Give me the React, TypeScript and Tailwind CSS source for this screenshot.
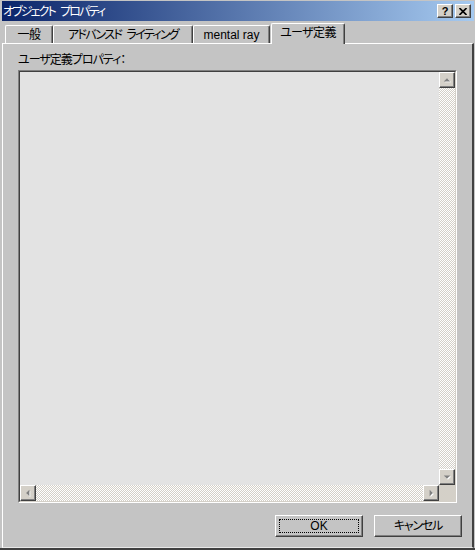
import React from 'react';

const Arrow = ({ dir }: { dir: 'up' | 'down' | 'left' | 'right' }) => {
    // small greyed-out triangle with a white shadow, like a disabled scroll arrow
    const shapes: Record<string, string> = {
        up: '4,9 7.5,5.5 11,9',
        down: '4,6 11,6 7.5,9.5',
        left: '9,4 9,11 5.5,7.5',
        right: '6,4 6,11 9.5,7.5',
    };
    return (
        <svg width="14" height="14" viewBox="0 0 15 15">
            <polygon points={shapes[dir]} fill="#ffffff" transform="translate(1 1)" />
            <polygon points={shapes[dir]} fill="#808080" />
        </svg>
    );
};

const ScrollButton = ({ dir }: { dir: 'up' | 'down' | 'left' | 'right' }) => (
    <div className="flex h-[16px] w-[16px] shrink-0 items-center justify-center border border-t-white border-l-white border-r-[#404040] border-b-[#404040] bg-[#d4d0c8] shadow-[inset_-1px_-1px_#808080]">
        <Arrow dir={dir} />
    </div>
);

const Track = ({ vertical }: { vertical?: boolean }) => (
    <div
        className={
            vertical
                ? 'w-full flex-1 bg-[image:repeating-conic-gradient(#ffffff_0_25%,#d4d0c8_0_50%)] bg-[length:2px_2px]'
                : 'h-full flex-1 bg-[image:repeating-conic-gradient(#ffffff_0_25%,#d4d0c8_0_50%)] bg-[length:2px_2px]'
        }
    />
);

const tabs = [
    { label: <>一般</>, key: 'general', className: 'w-[48px] tracking-[-0.5px]' },
    {
        label: (
            <>
                アドバンスド<span className="tracking-[2px]"> </span>ライティング
            </>
        ),
        key: 'advanced',
        className: 'w-[140px] tracking-[-1.7px]',
    },
    { label: <>mental ray</>, key: 'mr', className: 'w-[77px]' },
];

const App = () => {
    return (
        <div className="flex h-[550px] w-[475px] flex-col overflow-hidden border-b-2 border-b-[#404040] bg-[#c4c4c4] pl-[2px] pr-[1px] pt-[1px] font-['Liberation_Sans','Noto_Sans_CJK_JP',sans-serif] text-[12px] leading-[14px] text-black [font-feature-settings:'palt']">
            {/* title bar */}
            <div className="flex h-[20px] shrink-0 items-center justify-between bg-[linear-gradient(to_right,#0a246a,#a6caf0)] pl-[1px] pr-[3px]">
                <span className="pt-[2px] text-[12px] tracking-[-1.9px] text-white">
                    オブジェクト<span className="tracking-[2px]"> </span>プロパティ
                </span>
                <div className="flex gap-[2px]">
                    <div className="flex h-[14px] w-[16px] items-center justify-center border border-t-white border-l-white border-r-[#404040] border-b-[#404040] bg-[#d4d0c8] shadow-[inset_-1px_-1px_#808080] text-[11px] font-bold leading-none">
                        ?
                    </div>
                    <div className="flex h-[14px] w-[16px] items-center justify-center border border-t-white border-l-white border-r-[#404040] border-b-[#404040] bg-[#d4d0c8] shadow-[inset_-1px_-1px_#808080]">
                        <svg width="8" height="7" viewBox="0 0 8 7">
                            <path d="M0.5 0 L7.5 7 M7.5 0 L0.5 7" stroke="#000" strokeWidth="1.6" />
                        </svg>
                    </div>
                </div>
            </div>

            {/* tabs */}
            <div className="flex h-[22px] shrink-0 items-end pl-[3px]">
                {tabs.map((tab) => (
                    <div
                        key={tab.key}
                        className={`${tab.className} flex h-[18px] items-center justify-center rounded-t-[2px] border-l border-t border-r border-l-white border-t-white border-r-[#404040] shadow-[inset_-1px_0_#808080]`}
                    >
                        <span>{tab.label}</span>
                    </div>
                ))}
                <div className="relative z-10 mb-[-1px] ml-[1px] flex h-[21px] w-[74px] items-center justify-center rounded-t-[2px] border-l border-t border-r border-l-white border-t-white border-r-[#404040] bg-[#c4c4c4] pb-[2px] tracking-[-0.6px] shadow-[inset_-1px_0_#808080]">
                    ユーザ定義
                </div>
            </div>

            {/* tab panel */}
            <div className="flex flex-1 flex-col border-l border-t border-r-2 border-b border-l-white border-t-white border-r-[#404040] border-b-[#e8e8e8]">
                <div className="ml-[15px] pt-[9px] tracking-[-1px]">ユーザ定義プロパティ：</div>

                {/* user property text box */}
                <div className="ml-[15px] mt-[3px] h-[433px] w-[439px] border border-t-[#808080] border-l-[#808080] border-r-white border-b-white">
                    <div className="grid h-full w-full grid-cols-[1fr_16px] grid-rows-[1fr_16px] border border-t-[#404040] border-l-[#404040] border-r-[#d4d0c8] border-b-[#d4d0c8]">
                        <div className="bg-[#e3e3e3]" />
                        <div className="flex flex-col">
                            <ScrollButton dir="up" />
                            <Track vertical />
                            <ScrollButton dir="down" />
                        </div>
                        <div className="flex">
                            <ScrollButton dir="left" />
                            <Track />
                            <ScrollButton dir="right" />
                        </div>
                        <div className="bg-[#d4d0c8]" />
                    </div>
                </div>

                {/* buttons */}
                <div className="mt-[12px] flex justify-end gap-[11px] pr-[10px]">
                    <button className="h-[22px] w-[88px] border border-t-white border-l-white border-r-[#404040] border-b-[#404040] bg-[#c4c4c4] p-[3px] shadow-[inset_-1px_-1px_#808080]">
                        <div className="flex h-full w-full items-center justify-center border border-dotted border-black">
                            OK
                        </div>
                    </button>
                    <button className="h-[22px] w-[88px] border border-t-white border-l-white border-r-[#404040] border-b-[#404040] bg-[#c4c4c4] p-[3px] shadow-[inset_-1px_-1px_#808080]">
                        <div className="flex h-full w-full items-center justify-center tracking-[-1.2px]">
                            キャンセル
                        </div>
                    </button>
                </div>
            </div>
        </div>
    );
};

export default App;
